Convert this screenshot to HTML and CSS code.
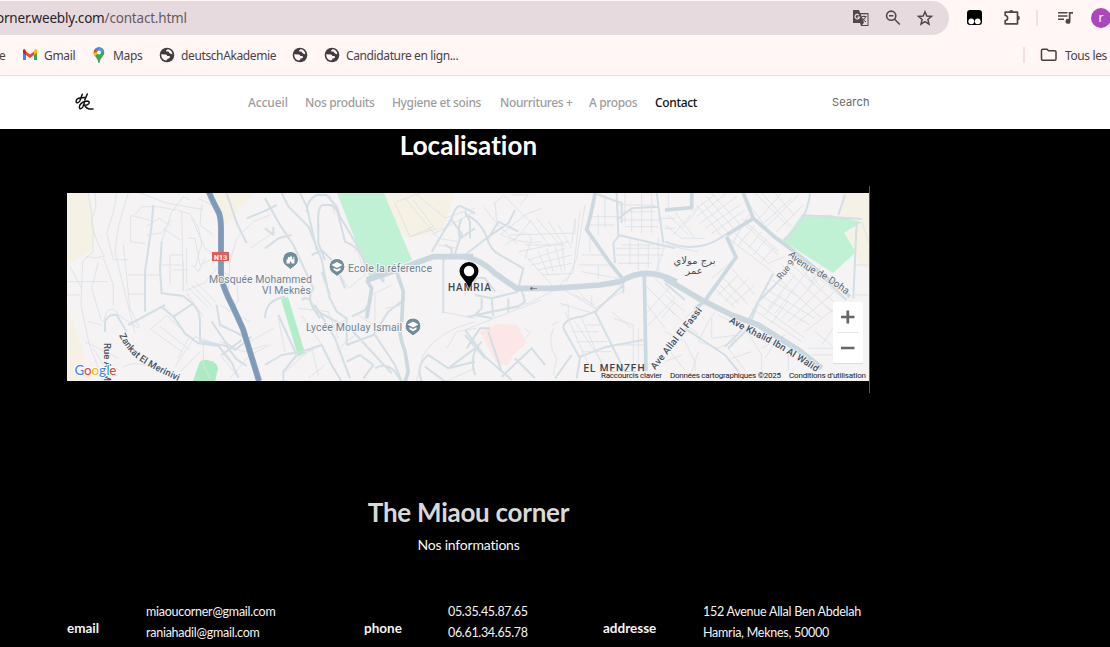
FILE: index.html
```html
<!DOCTYPE html>
<html lang="fr">
<head>
<meta charset="utf-8">
<title>Contact</title>
<link rel="stylesheet" href="styles.css">
</head>
<body>
<div class="browser">
  <div class="toolbar">
    <div class="address">
      <span class="url"><b>orner.weebly.com</b>/contact.html</span>
      <svg class="icon translate" viewBox="0 0 18 18"><path d="M1 1h6l1.2 3H16.500v13H9l-1-3H1z" fill="#51474a"/><path d="M8.800 5.200H15.500v10.700H10l2-2.200z" fill="#e6dade"/><path d="M6.800 6.100a2.200 2.200 0 1 0 .6 2H5.500" fill="none" stroke="#e6dade" stroke-width="1.200"/><path d="M9.500 7.500h5M12 6.500v1M13.700 7.500q-.8 3-3.500 4.600M10.600 9q1 2.500 3.400 4" fill="none" stroke="#51474a"/></svg>
      <svg class="icon lens" viewBox="0 0 18 18" fill="none" stroke="#51474a" stroke-width="1.600"><circle cx="7.200" cy="6.700" r="4.600"/><path d="M10.600 10.200l5.200 5.300M5 6.700h4.400"/></svg>
      <svg class="icon star" viewBox="0 0 18 18" fill="none" stroke="#51474a" stroke-width="1.500"><path d="M9 2.800l1.800 4.200 4.700.4-3.600 3.100 1.100 4.600-4-2.500-4 2.500 1.100-4.600-3.600-3.100 4.700-.4z"/></svg>
    </div>
    <svg class="icon ext" viewBox="0 0 14 14"><rect width="14" height="14" rx="3"/><circle cx="4" cy="10.600" r="2.700" fill="#fff"/><circle cx="10" cy="10.600" r="2.700" fill="#fff"/></svg>
    <svg class="icon puzzle" viewBox="0 0 18 18"><path d="M2.200 3.200H14.500v11.600H2.200v-3.300q2.400-.1 2.400-2.500T2.200 6.500z" fill="none" stroke="#51474a" stroke-width="1.700" stroke-linejoin="round"/><path d="M6.200 3a2.100 2.100 0 0 1 4.200 0M14.700 6.800a2.200 2.200 0 0 1 0 4.400" fill="#51474a"/></svg>
    <span class="divider"></span>
    <svg class="icon media" viewBox="0 0 18 18"><path d="M1 3.700h9.500M1 7h9.500M1 10.300h6" stroke="#51474a" stroke-width="1.600"/><path d="M11.800 2.900H16v1.800h-2.500v7.500a2.500 2.500 0 1 1-1.700-2.300z" fill="#51474a"/></svg>
    <span class="avatar">r</span>
  </div>
  <div class="bookmarks">
    <span class="bm-e">e</span>
    <svg class="bm-icon" viewBox="0 0 16 16"><path d="M1 3v10h3V6z" fill="#4285f4"/><path d="M12 6v7h3V3z" fill="#34a853"/><path d="M12 4.500V8l3-2.300V3.500c0-1.300-1.500-1.600-2.200-1z" fill="#fbbc04"/><path d="M4 4.500V8l4 3 4-3V4.500L8 7.500z" fill="#ea4335"/><path d="M1 3.500v2.200L4 8V4.500L3.200 2.700C2.500 2 1 2.300 1 3.500z" fill="#c5221f"/></svg>
    <span class="gmail">Gmail</span>
    <svg class="bm-icon maps-pin" viewBox="0 0 16 16"><path d="M2.700 5.500a5.300 5.300 0 0 1 10.600 0c0 4-4 4.800-4.600 10q-.7 1-1.400 0C6.800 10.500 2.700 9.500 2.700 5.500z" fill="#34a853"/><path d="M2.700 5.500q0 2 1.300 3.500l8-7A5.300 5.300 0 0 0 8 .2z" fill="#fbbc04"/><path d="M9.700.5a5.300 5.300 0 0 0-5.800 1.700L6.500 4.500z" fill="#4285f4"/><path d="M3.900 2.200A5.300 5.300 0 0 0 2.700 6l3.800-1.500z" fill="#ea4335"/><path d="M9.700.5q2 .7 3 2.600L9.500 6.700 6.500 4.500z" fill="#4f91f5"/><circle cx="8" cy="5.500" r="1.900" fill="#fff"/></svg>
    <span class="maps">Maps</span>
    <svg class="bm-icon" viewBox="0 0 16 16"><circle cx="8" cy="8" r="7.300" fill="#3f3d40"/><path d="M2.200 7.300l4.200.2q1.700-.2 1.900 1.500l2.200.1q1.400 1.500-.3 2.200l-1.800.4q.2 1.500-1.700 1.900Q2.300 12.500 2.200 7.300M8.700 2.200q-2.200 1-1.600 2.200l2.300.2q.7 1.600 2.100 2.100 1.300.1 1.800.9Q13.300 2.800 8.700 2.200" fill="#fff6f5"/></svg>
    <span class="deutsch">deutschAkademie</span>
    <svg class="bm-icon" viewBox="0 0 16 16"><circle cx="8" cy="8" r="7.300" fill="#3f3d40"/><path d="M2.200 7.300l4.200.2q1.700-.2 1.900 1.500l2.200.1q1.400 1.500-.3 2.200l-1.800.4q.2 1.500-1.700 1.900Q2.300 12.500 2.200 7.300M8.700 2.200q-2.200 1-1.600 2.200l2.300.2q.7 1.600 2.100 2.100 1.300.1 1.800.9Q13.300 2.800 8.700 2.200" fill="#fff6f5"/></svg>
    <svg class="bm-icon" viewBox="0 0 16 16"><circle cx="8" cy="8" r="7.300" fill="#3f3d40"/><path d="M2.200 7.300l4.200.2q1.700-.2 1.900 1.500l2.200.1q1.400 1.500-.3 2.200l-1.800.4q.2 1.500-1.700 1.900Q2.300 12.500 2.200 7.300M8.700 2.200q-2.200 1-1.600 2.200l2.300.2q.7 1.600 2.100 2.100 1.300.1 1.800.9Q13.300 2.800 8.700 2.200" fill="#fff6f5"/></svg>
    <span class="candid">Candidature en lign...</span>
    <span class="divider"></span>
    <svg class="bm-folder" viewBox="0 0 18 16"><path d="M1.500 3.300V12q0 1.200 1.200 1.200h12.100q1.200 0 1.200-1.200V4.900q0-1.200-1.200-1.200H8.500L7 2.200H2.700q-1.200 0-1.200 1.100z" fill="none" stroke="#463d40" stroke-width="1.500"/></svg>
    <span class="tous">Tous les</span>
  </div>
</div>

<header class="site-header">
  <svg class="logo" viewBox="0 0 20 18" fill="none" stroke="#111" stroke-width="1.500" stroke-linecap="round" stroke-linejoin="round"><path d="M7.300 1.300L4.800 8Q3.500 10.300 1.600 9.600.6 8 2 6.200 3.500 4.800 6 5L11 4.200M12.300 1L9.700 7"/><path d="M9.700 9L7.800 14Q6.500 16.300 4.800 15.600 3.800 14 5 11.800 7.500 8.500 11.500 8 15 8 14 10.300 12.800 12.200 9.500 12.200 11.500 15.700 14 16H18"/></svg>
  <nav class="nav">
    <a class="n1">Accueil</a><a class="n2">Nos produits</a><a class="n3">Hygiene et soins</a><a class="n4">Nourritures +</a><a class="n5">A propos</a><a class="active n6">Contact</a>
  </nav>
  <span class="search">Search</span>
</header>

<main class="page">
  <h2 class="title">Localisation</h2>
  <div class="map-frame">
  <svg class="map" viewBox="67 193 802 188">
    <rect x="67" y="193" width="802" height="188" fill="#f5f3f4"/>
    <!-- sandy ground -->
    <g fill="#f6f1e5">
      <path d="M67 193h21l3 14 4 20-2 20-8 8-18 9zM67 307l15 40 5 34H67z"/>
      <path d="M215 193h40l-25 27-8 6zM384 193h71l-5 16-9 23-34 6-12-15z"/>
      <path d="M842 193h27v77l-9-5-6-19-10-10 13-9-17-10z"/>
    </g>
    <!-- parks -->
    <g fill="#c1f1d5">
      <path d="M337 193h47l28 67-42 18z"/>
      <path d="M802 215h28l32 7-18 11 12 19-23 21-50-32z"/>
      <path d="M281 299l7-2 17 56-7 3z" fill="#b0edc8"/>
      <path d="M193 381l6-17q2-5 8-4 11 2 11 9l-3 12z" fill="#adebc4"/>
    </g>
    <path d="M480 332l17-8 20 1 10 18-14 12-5 10-11-2z" fill="#fce6e6"/>

    <!-- western streets -->
    <g class="streets" transform="translate(60 185) scale(.33333)">
      <path d="M85 24l10 60 5 60-2 56-30 30-5 130 10 50 15 70 20 50 20 60M105 24l3 40-15 50 20 60 20 40-30 5-25-5M170 24l-10 60-20 60 20 80 45 0M205 24l-30 100-10 80 30 120 30 120M190 180l20 190 30 60M60 330H20M30 245l35 65M205 270h98M205 327h50M212 90v80l45 6M215 92l56 14M225 90l20-25h50l50 10M350 75l40 12 25 40 10 50-20 70M258 125l40-25 35 25M260 150l45-6 30-40M330 210v90M330 210h40M365 80l5 235M305 240h60M340 75l30-40 20 10M240 24l80 30 110 20M310 130l50 35M385 160h20l15 80 60-30M425 60l-5 60 40 30M395 100l40 90 50 30M395 240l20 20 20-40M340 255h40M370 230v90M380 190v110M415 40l60 30M20 290h120M130 220l30 80 0 60M115 230l-20 80 30 100M85 410l40 10M75 470l100 50M100 490l30 50"/>
      <path d="M350 70l-15 10-30 90M375 318l60-25 40-50M385 308l60 60M395 300l60 62M408 292l60 60M380 325l50 70M480 360l90 50M270 435l50-45 40 40M300 425l90 70M275 435l90 65M345 545l60-90 75 25M360 560l60-60M480 510l50 60M385 460l-30 60 M190 545l30-10 60 10 50 30M480 470l70 30 70-20M490 260l40 30 5 60-30 30M130 410l10-30q20-20 35 10l60 40"/>
      <path class="medium" d="M305 170l-5 85 5 70 65 8 30 25q20 20 20 50v60l80 15 30 40 30 20M305 365l35 30 35 50 40 30 60 8 40 50 20 45M205 420l110-60M255 380l0-120 20-140 5-60M340 395l60-40M455 410l40 60 30 25 50-40M135 440v-30q10-25 35-20l30 50M500 24l30 90 30 60M560 100l50-20 40-20M470 360l10 60 75 35M485 510l60-45"/>
      <path d="M630 90l-50 20-50 50-20 70-5 100M630 480l-60 30-60 70M570 190l60-40M430 480v60l20 40M590 270l40 60M520 440l50 30 70-40"/>
    </g>
    <!-- mosque and school streets -->
    <g class="streets" transform="translate(265 185) scale(.33333)">
      <path class="medium" d="M0 40l45 80 40 60 60 130q-20 25 0 60l20 30M50 24l20 40 60 60 40 100 20 100M125 80q0-35 30-50h30l30 35 10 30 45 75 30 60M160 140q-5-80 15-80h20q20 5 25 30l20 80q50 20 60 70M160 115v60l20 50M105 24l20 40 30 130M0 130l25 20 0-25M0 190l40-30 40-10M300 230l55 60 0-20M140 210l30-15 40 40 30 75M170 260l25 70M0 400q0-55 60-65M110 345q20-20 40 30l110 60 120 130M190 330l25 50 30 20 0 80M260 395l40-20 20-35M0 540l50-30 60-10 60-20 30 60 30 50M245 480l80-30 45-70 40-30M330 550q30-20 60 10l20 30M330 450l60 90 20 50M245 530l40-20 40 30-30 40M40 390l55 120-40 50 0 30M150 360l60 100 45 120"/>
      <path d="M195 30l15 60M270 170l30 100-50 40-30-50M265 200l30-15M320 330l60-30M280 390l60 40M330 330v80M360 370l50-10M100 370l90 10 30 80M110 390l60 90M40 400l20 100M60 560l80-70 20 80M90 520l60-30M130 580l50-40M190 430l60-30M215 495l60-50M395 50l70-25M450 24l90 75 90-30M390 55l45 100 70-30-60-80M420 40l100 120 60 10M435 155l80-25M500 150l130-70"/>
      <path class="medium" d="M500 200l60-100q15-45 30-35l40 20M560 105l30 40-20 60M590 100q-15 30-5 60l45-30M535 210l0 175M540 180l20 10 0 30M470 590q-20-50 20-80l60 40 80-20M480 545l60 45M550 550l80-60"/>
      <path d="M520 180l60 10M530 380l100 20M455 590l15-70q20-50 100-90l60-20M545 490l30-50 60-10M540 590l90-40"/>
      <path class="avenue" d="M305 285l90-30 110-40h120"/>
      <path class="main" d="M305 285l15 25-15 90M395 260l20 60-5 90q-15 20 10 90l10 60-10 30"/>
    </g>
    <!-- central streets -->
    <g class="streets" transform="translate(465 185) scale(.33333)">
      <path d="M55 65l40 50 60 60M90 50l5 60M85 60l30-30 80 80-50 60M140 30l50 0-25 30M105 150l75-60 50-20M110 150q70 30 120 20M120 180l60-40 20 20-20 60M195 105l60 80M215 100l70 80M250 110l40 60M280 120l40 70M180 180h120M160 200l150-30M190 225l110-35M200 240l120-30M215 255l105-20M230 270l90-5M220 200l30 70M245 190l20 70M270 180l20 80M290 170l10 90M185 215l80 90M135 150l170-5M330 100v45h-30M345 80l-20 180-40 40M360 60l-25 160-30 70M330 105l-10 70M380 95h80M365 120h80M400 90v60M420 30v100M350 210h70M340 240h90M350 260l110 20M375 160v40M400 240v40M410 200l40 60M0 395l190-40 90-45M0 435l100-40 130-50M290 310l100 60 80-50M320 300l80 80M285 355l100 30M330 330l60 30M380 330v30"/>
      <path class="medium" d="M0 90q40 10 65 65 10 40 40 55l70 40-15 60M0 210l70-55 60-40 20-40M70 160l30-50 60 30M10 395l150-30 20-15-10-35M30 330l50 10 80-20M80 340l5 55M50 340v30l-20 20 50 10M130 340v40M0 80l15 30 0 50M30 310q-10-40 30-30l30 40M385 24l85 30 0 60M455 24l5 130-15 20 5 60M460 150l170 40M460 100l40-30 80-5M575 24l20 150M295 430q0-30 55-35l40-15 85-80M390 380l60 120 40 80M295 430l50 90-10 60M110 575l90-85 40 50M150 520l60 60M5 490l40-60 30 0M30 570q-20-60 20-100M475 285v40M345 515l80-30 110-20M270 580l50-70"/>
      <path d="M480 24v90M500 70v70M530 24v120M560 24v120M460 60h110M460 80h110M465 105h120M480 125h100M470 180h100M450 190h140M455 210h140M460 235h100M495 160v80M520 170v85M550 170v80M580 160v100M600 180l-30 90M590 100h40M600 130h30M610 24v45M600 70h30M300 380l80 180M330 410l80 120M350 400l70 160M365 420h40M320 440h80M335 470h90M350 500h90M290 360l20 0 0 40M260 420l20-10M265 430q-20 50 10 90l-10 50M440 380l60 50M445 400l60 20v150M520 430v130M470 480h70M180 430l15 15-15 15M540 300l90 90M540 350l60 80M540 390l80-90M540 430l90-90M570 280l60 60M590 400l40-50"/>
      <path class="medium" d="M0 435l60 80 80 70M60 520L0 450M70 440l40 120"/>
      <path class="avenue" d="M0 215q50 10 90 50l65 45 110 0 140-10 60-10q40-25 80-25 40 0 90 25"/>
      <path class="main" d="M390 24q-10 60-25 110l70 100 40 50M538 270l5 290"/>
    </g>
    <!-- eastern streets -->
    <g class="streets" transform="translate(665 185) scale(.33333)">
      <path d="M95 60l80 100M110 50l80 95M125 35l80 95M140 24l90 100M80 80l70-50M95 95l90-70M105 115l110-80M120 130l105-70M140 145l100-70M0 120l50 40 70 0M10 90l60 60M30 80l60 80M50 130l50-60M25 150l50-60M240 40l80 110M270 24l100 100M290 24l90 100M330 24l60 70M350 24l-70 80M380 40l-90 80M400 30l-100 100M415 60l-80 80M230 100l110 100M250 90l-50 90M190 160l130 100M210 145l100 90 50-20M240 120l100 90M220 180l50-60M250 190l40-50M265 210l40-50M290 230l40-45M150 310l60 60M160 295l60 60M175 280l65 65M190 300l60 60M200 250l70 80M160 330l60-60M180 350l70-70M200 360l70-60"/>
      <path d="M330 270l140 130M350 240l150 140M370 230l165 145M390 220l150 125M285 330l150 90M300 310l150 90M260 370l150 100M270 350l150 110M310 370l80-100M330 385l100-130M350 400l110-120M370 410l110-110M390 420l120-100M420 440l90-70M320 285l80 50M350 330l-50 60M370 345l-50 70M470 480l40-60M450 440l60 50M430 490h80M440 510h70M480 360l80 70M570 330h40M565 240h45M575 110l-5 100M590 110l20 60M410 250l40 50M440 270l30 40M500 270l40 50M470 240l-40 70"/>
      <path d="M0 360l100 90M0 330l60 50M30 290l70 60M150 380l-20 30-30 60 60 20 60-30M140 400v60l80-10M160 390l60 30M0 440l60 30 30 60 0 60M230 430l-40 60 60 80M240 430l50 80 0 60M290 490l70-40M200 520l60-20M100 500l-20 60M0 480l70 90M120 350l-60 50M0 180l100 20M200 230l-60 50M0 530l50-20M300 520l40-60M370 490v70"/>
      <path class="medium" d="M0 170q100 40 180-20l90-50M235 24l30 75 65 55 65 50 150 140M355 165q70-50 80-140M410 90l180 12M575 110l-10 230M330 160l20 5M375 230l-35 60-60 60-30 80-60 60M0 295l60 50M60 430l120 80 50 60M180 485l60-60M540 30l-20 60M245 415l80-150"/>
      <path class="main" d="M0 75l80-7V24M185 155l28 62-93 130-30 25M185 150l80-50-30-76"/>
      <path class="avenue" d="M0 280l110 65 90 45 80 30 120 75 70 55"/>
      <path class="main" d="M265 100l65 57 65 48 160 130"/>
    </g>
    <path d="M209 192q3 8 10 21 2 6 2 15v48q2 12 12 31l10 22 16 52" fill="none" stroke="#89a4bf" stroke-width="6"/>
    <path d="M209 192q3 8 10 21 2 6 2 15v48q2 12 12 31l10 22 16 52" fill="none" stroke="#7f9ab6" stroke-width="4"/>
    <rect x="212" y="252" width="17" height="9" fill="#e25c5c"/><text class="route" x="214" y="259.500" textLength="13">N13</text>

    <g class="poi">
      <text x="209" y="283" textLength="103">Mosquée Mohammed</text>
      <text x="262" y="293.500" textLength="49">VI Meknès</text>
      <text x="348" y="272" textLength="84">Ecole la réference</text>
      <text x="306" y="331" textLength="96">Lycée Moulay Ismail</text>
    </g>
    <g stroke="#fff">
      <path d="M290.500 251.500a8 8 0 0 1 4.500 14.500l-4.500 3.500-4.500-3.500a8 8 0 0 1 4.500-14.500z" fill="#728c99"/>
      <path d="M337 258.500a8 8 0 0 1 4.500 14.500l-4.500 3.500-4.500-3.500a8 8 0 0 1 4.500-14.500z" fill="#728c99"/>
      <path d="M413 318a8 8 0 0 1 4.500 14.500l-4.500 3.500-4.500-3.500a8 8 0 0 1 4.500-14.500z" fill="#728c99"/>
    </g>
    <path d="M286.500 263.500v-4h1.300v-2l1-.8 1 .8 1.200-2 1.200 2v2h1.200v-2.800h1v6.800h-3v-2h-1.500v2z" fill="#fff"/>
    <path d="M331.500 265l5.500-3 5.500 3-5.500 3zM333.500 267.800l3.500 1.700 3.500-1.700v2l-3.500 2-3.500-2zM407.500 324.500l5.500-3 5.500 3-5.500 3zM409.500 327.300l3.500 1.700 3.500-1.700v2l-3.500 2-3.500-2z" fill="#fff"/>
    <text class="district" x="448" y="290.500" textLength="43">HAMRIA</text>
    <text class="district" x="583.500" y="371.500" textLength="61">EL MENZEH</text>
    <path d="M530 288.500h7M530 288.500l2-1.500v3z" stroke="#777" fill="#777" stroke-width=".8"/>
    <g class="arabic"><text x="694.500" y="264" text-anchor="middle" textLength="42" lengthAdjust="spacingAndGlyphs">برج مولاي</text><text x="694" y="274" text-anchor="middle" textLength="17" lengthAdjust="spacingAndGlyphs">عمر</text></g>
    <defs>
      <path id="merin" d="M119 335Q127 352 140 361T185 384"/>
      <path id="khalid" d="M729 322q13 8 32 17t58 35"/>
      <path id="doha" d="M788 255q10 11 26 19t34 22"/>
    </defs>
    <g class="road">
      <text textLength="77"><textPath href="#merin">Zankat El Merinivi</textPath></text>
      <text textLength="101"><textPath href="#khalid">Ave Khalid Ibn Al Walid</textPath></text>
      <text class="soft" textLength="71"><textPath href="#doha">Avenue de Doha</textPath></text>
      <text transform="translate(103.500 343) rotate(90)">Rue Al M</text>
      <text transform="translate(655 370) rotate(-51.500)" textLength="76">Ave Allal El Fassi</text>
      <text class="soft small" transform="translate(781 280) rotate(-51)" textLength="22">Rue 9</text>
    </g>
    <path d="M469 288q-2-5-6.500-10-3-3.500-3-7a9.500 9 0 0 1 19 0q0 3.500-3 7-4.500 5-6.500 10z"/><circle cx="469" cy="271" r="5.200" fill="#fff"/>
    <rect x="598" y="371" width="271" height="10" fill="#f5f3f4" fill-opacity=".8"/>
    <g class="credits"><text x="601" y="378" textLength="61">Raccourcis clavier</text><text x="670" y="378" textLength="111">Données cartographiques ©2025</text><text x="789" y="378" textLength="77">Conditions d'utilisation</text></g>
    <g class="google"><text y="375"><tspan x="74.500" fill="#4285f4">G</tspan><tspan x="84" fill="#ea4335">o</tspan><tspan x="91.500" fill="#fbbc04">o</tspan><tspan x="99" fill="#4285f4">g</tspan><tspan x="106.500" fill="#34a853">l</tspan><tspan x="109.300" fill="#ea4335">e</tspan></text></g>
    <rect x="833" y="302" width="30" height="62" rx="1" fill="#ddd"/><rect x="833" y="302" width="30" height="61" rx="1" fill="#fff"/>
    <path d="M837 332.500h22" stroke="#e6e6e6"/><path d="M841 317h13.500M847.800 310.500v13M841 348h13.500" stroke="#666" stroke-width="2.700"/>
  </svg>
  </div>

  <section class="about">
    <h2 class="shop">The Miaou corner</h2>
    <p class="subtitle">Nos informations</p>
    <div class="contacts">
      <strong class="k1">email</strong><p class="v1">miaoucorner@gmail.com<br>raniahadil@gmail.com</p>
      <strong class="k2">phone</strong><p class="v2">05.35.45.87.65<br>06.61.34.65.78</p>
      <strong class="k3">addresse</strong><p class="v3">152 Avenue Allal Ben Abdelah<br>Hamria, Meknes, 50000</p>
    </div>
  </section>
</main>
</body>
</html>
```
FILE: styles.css
```css
* { box-sizing: border-box; }
body { margin: 0; width: 1110px; height: 647px; overflow: hidden; background: #000; font-family: Lato, sans-serif; display: flex; flex-direction: column; }
h2, p { margin: 0; }
svg { display: block; }
.browser { height: 76px; background: #fff6f5; border-bottom: 1px solid #eadcdf; font-family: "Noto Sans", sans-serif; overflow: hidden; flex: none; }
.toolbar { display: grid; grid-template-columns: 967px 36px 33px 21px 34px 20px; height: 35px; align-items: center; }
.address { width: 949px; height: 34px; margin-top: 1px; background: #e6dade; border-radius: 0 17px 17px 0; display: grid; grid-template-columns: 852px 32px 32px 18px; align-items: center; }
.url { margin-left: -4px; font-size: 13.500px; color: #655a5e; white-space: nowrap; letter-spacing: -.19px; }
.url b { font-weight: 400; color: #292326; }
.icon { width: 18px; height: 18px; }
.ext { width: 15px; height: 15px; }
.divider { width: 2px; height: 16px; background: #f9dce1; }
.avatar { width: 20px; height: 20px; border-radius: 50%; background: #ab47bc; color: #fff; font-size: 12px; line-height: 19px; text-align: center; }
.bookmarks { height: 40px; display: grid; grid-template-columns: 22px 22px 47px 22px 46px 22px 111px 32px 22px 677px 17px 25px 60px; align-items: center; font-size: 12px; letter-spacing: -.38px; color: #4b4245; white-space: nowrap; }
.gmail, .maps { letter-spacing: -.3px; }
.bm-icon { width: 16px; height: 16px; }
.bm-folder { width: 18px; height: 16px; }
.bm-e { margin-left: -1px; }
.site-header { height: 53px; flex: none; background: #fff; display: grid; grid-template-columns: 173px 584px 60px; padding: 0 0 1px 75px; align-items: center; }
.logo { width: 20px; height: 18px; }
.nav { display: grid; grid-template-columns: 57px 87px 108px 89px 66px 60px; font: 500 12px "Noto Sans", sans-serif; letter-spacing: -.36px; color: #9d9d9d; white-space: nowrap; }
.n1 { letter-spacing: -.1px; }
.nav .active { color: #111; }
.search { font: 11px Inter, sans-serif; color: #666; letter-spacing: .2px; }
.page { width: 937px; padding: 0 67px; }
.title, .shop { text-align: center; font-size: 26px; line-height: 34px; font-weight: 700; color: #fff; }
.title { height: 33px; line-height: 32px; letter-spacing: .05px; }
.map-frame { width: 803px; height: 207px; margin-top: 24px; padding-top: 7px; border-right: 1px solid #555; }
.map { width: 802px; height: 188px; }
.streets { fill: none; stroke: #dce2e7; stroke-width: 2.700; stroke-linejoin: round; }
.streets .medium { stroke: #d4dee5; stroke-width: 6; }
.streets .main { stroke: #cdd9e0; stroke-width: 11; }
.streets .avenue { stroke: #cbd7de; stroke-width: 17; }
.map text { font-family: Roboto, sans-serif; }
.poi { font-size: 10.500px; fill: #6f8491; paint-order: stroke; stroke: #f5f3f4; stroke-width: 2px; }
.map .route { font-size: 7px; font-weight: 700; fill: #fff; }
.district { font-size: 10px; font-weight: 500; fill: #3e464b; }
.map .arabic text { font-family: "DejaVu Sans", sans-serif; font-size: 10px; fill: #4c5054; }
.road { font-size: 9.500px; font-weight: 500; fill: #44515f; paint-order: stroke; stroke: #f5f3f4; stroke-width: 1.500px; }
.road .soft { font-weight: 400; fill: #5d6b76; font-size: 10px; }
.road .small { font-size: 9px; }
.credits { font-size: 8px; fill: #222; }
.map .google text { font-family: Lato, sans-serif; font-size: 13.500px; font-weight: 500; paint-order: stroke; stroke: #fff; stroke-width: 2px; }
.about { margin-top: 102px; }
.shop { color: #d8d8d8; letter-spacing: -.26px; }
.subtitle { margin-top: 5px; text-align: center; color: #f5f5f5; font-size: 14px; line-height: 22px; letter-spacing: -.2px; }
.contacts { margin-top: 45px; display: grid; grid-template-columns: 79px 218px 84px 155px 100px 167px; color: #f4f4f4; }
.contacts p { font-size: 12.500px; line-height: 21px; letter-spacing: -.25px; white-space: nowrap; }
.contacts .v2 { letter-spacing: -.33px; }
.contacts strong { font-size: 13.500px; line-height: 20px; margin-top: 17px; }
```
